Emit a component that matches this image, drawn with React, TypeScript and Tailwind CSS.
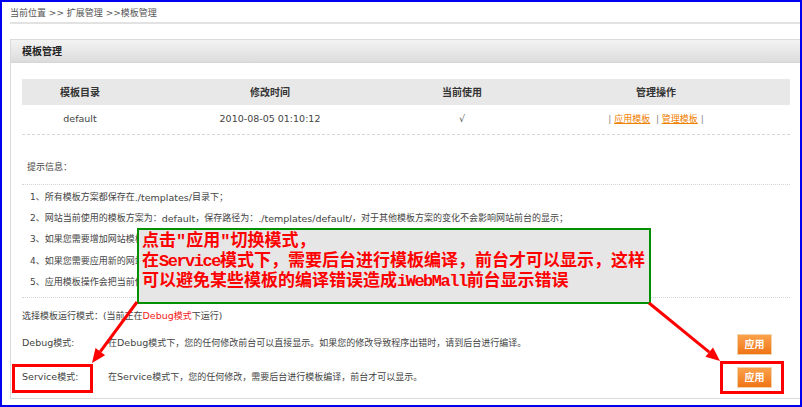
import React from "react";

const body = "font-['DejaVu_Sans','Noto_Sans_CJK_SC',sans-serif]";

function Tips() {
  const items = [
    <>1、所有模板方案都保存在 <span className="text-[9.5px]">./templates/</span> 目录下；</>,
    <>2、网站当前使用的模板方案为：<span className="text-[9.5px]">default</span> ，保存路径为： <span className="text-[9.5px]">./templates/default/</span> ，对于其他模板方案的变化不会影响网站前台的显示；</>,
    <>3、如果您需要增加网站模板方案，请将模板上传到模板目录下；</>,
    <>4、如果您需要应用新的网站模板方案，请点击“应用模板”；</>,
    <>5、应用模板操作会把当前使用的模板方案替换掉；</>,
  ];
  return (
    <div>
      <div className="h-[50px] pl-[5px] pb-[10px] flex items-end border-b border-dotted border-[#d4d4d4] text-[#444]">提示信息：</div>
      <div className="pt-[2px] pb-[4px] pl-[8px] border-b border-dotted border-[#d4d4d4]">
        {items.map((it, i) => (
          <div key={i} className="h-[21.3px] flex items-center text-[#444] whitespace-nowrap">{it}</div>
        ))}
      </div>
    </div>
  );
}

function ApplyBtn() {
  return (
    <div className="w-[35px] h-[21px] mr-[18px] flex items-center justify-center bg-gradient-to-b from-[#fba24a] to-[#ef7410] border border-[#f3d2b0] text-white font-bold text-[10px]">
      应用
    </div>
  );
}

export default function App() {
  return (
    <div className={`relative w-[802px] h-[407px] overflow-hidden bg-white border-2 border-[#0000f0] text-[9px] ${body}`}>
      <div className="pl-[8px]">
        <div className="h-[22px] pt-[4px] border-b-2 border-[#e2e2e2] text-[#555] flex items-center pb-[1px] -mr-[4px]">
          当前位置 &gt;&gt; 扩展管理 &gt;&gt;模板管理
        </div>

        <div className="mt-[15px] w-[795px] border border-[#dadada]">
          <div className="h-[23px] pl-[11px] flex items-center bg-gradient-to-b from-[#f3f3f3] to-[#dcdcdc] border-b border-[#d6d6d6] font-bold text-[10px] text-[#222]">
            模板管理
          </div>

          <div className="pl-[11px] pr-[16px] pt-[16px] pb-[10px]">
            <div className="w-[768px]">
              <div className="grid grid-cols-[116px_264px_120px_1fr] h-[26px] items-center bg-[#e8e8e8] font-bold text-[10px] text-[#333] text-center">
                <div>模板目录</div>
                <div>修改时间</div>
                <div>当前使用</div>
                <div>管理操作</div>
              </div>
              <div className="grid grid-cols-[116px_264px_120px_1fr] h-[30px] items-center border-b border-dashed border-[#d8d8d8] text-[9.5px] text-[#444] text-center">
                <div>default</div>
                <div>2010-08-05 01:10:12</div>
                <div className="text-[#555]">√</div>
                <div className="text-[9px] text-[#888]">
                  | <span className="text-[#f08000] underline">应用模板</span> &nbsp;| <span className="text-[#f08000] underline">管理模板</span> |
                </div>
              </div>

              <Tips />

              <div className="h-[36px] flex items-center text-[#444]">
                选择模板运行模式：(当前正在<span className="text-[#f31a1a]"><span className="text-[9.5px]">Debug</span>模式</span>下运行)
              </div>
              <div className="h-[21px] flex items-center text-[#444]">
                <div className="w-[86px] -mt-[4px]"><span className="text-[9.5px]">Debug</span>模式:</div>
                <div className="flex-1 -mt-[4px]">在<span className="text-[9.5px]">Debug</span>模式下，您的任何修改前台可以直接显示。如果您的修改导致程序出错时，请到后台进行编译。</div>
                <ApplyBtn />
              </div>
              <div className="mt-[11px] h-[22px] flex items-center text-[#444]">
                <div className="w-[86px]"><span className="text-[9.5px]">Service</span>模式:</div>
                <div className="flex-1">在<span className="text-[9.5px]">Service</span>模式下，您的任何修改，需要后台进行模板编译，前台才可以显示。</div>
                <ApplyBtn />
              </div>
            </div>
          </div>
        </div>
      </div>

      {/* callout annotation */}
      <div className="absolute left-[135px] top-[226px] w-[514px] h-[76px] border-2 border-[#009000] bg-[#e6e6e6] pl-[3px] pt-[2px] text-[17px] leading-[20px] font-bold text-[#ff0000] whitespace-nowrap font-['Liberation_Mono','Noto_Sans_CJK_SC',monospace]">
        <div>点击"应用"切换模式，</div>
        <div>在<span className="tracking-[-1.5px]">Service</span>模式下，需要后台进行模板编译，前台才可以显示，这样</div>
        <div>可以避免某些模板的编译错误造成<span className="tracking-[-1.5px]">iWebMall</span>前台显示错误</div>
      </div>

      {/* highlight boxes */}
      <div className="absolute left-[10px] top-[362px] w-[81px] h-[29px] border-[3px] border-[#ff0000]" />
      <div className="absolute left-[718px] top-[359px] w-[64px] h-[33px] border-[3px] border-[#ff0000]" />

      {/* arrows */}
      <svg className="absolute -left-[2px] -top-[2px] pointer-events-none" width="802" height="407" viewBox="0 0 802 407">
        <line x1="137" y1="302" x2="100.3" y2="351.7" stroke="#ff0000" strokeWidth="3" />
        <polygon points="92,363 105.1,355.3 95.5,348.1" fill="#ff0000" />
        <line x1="649" y1="303" x2="709.2" y2="352.1" stroke="#ff0000" strokeWidth="3" />
        <polygon points="720,361 705.4,356.7 713,347.5" fill="#ff0000" />
      </svg>
    </div>
  );
}
